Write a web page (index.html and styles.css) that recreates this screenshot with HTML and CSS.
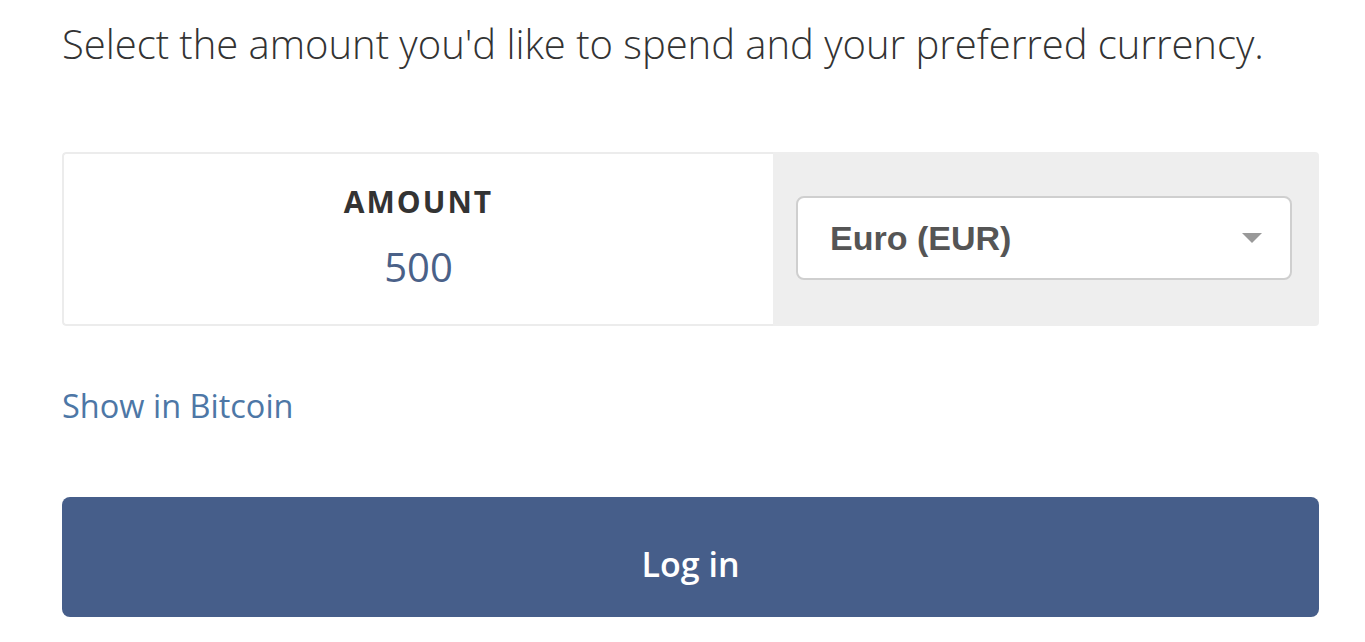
FILE: index.html
```html
<!DOCTYPE html>
<html>
<head>
<meta charset="utf-8">
<link rel="stylesheet" href="styles.css">
</head>
<body>
<main class="page">
  <p class="intro">Select the amount you'd like to spend and your preferred currency.</p>
  <div class="picker">
    <div class="amount">
      <div class="amount-label">AMOUNT</div>
      <div class="amount-value">500</div>
    </div>
    <div class="currency">
      <div class="select">
        <span class="select-text">Euro (EUR)</span>
        <svg class="caret" width="20" height="10" viewBox="0 0 20 10"><path d="M0 0 L20 0 L10 10 Z" fill="#999"/></svg>
      </div>
    </div>
  </div>
  <a class="toggle" href="#">Show in Bitcoin</a>
  <button class="login">Log in</button>
</main>
</body>
</html>
```
FILE: styles.css
```css
html, body {
  margin: 0;
  padding: 0;
  background: #fff;
}
body {
  font-family: "Open Sans", "Liberation Sans", sans-serif;
  color: #333;
}
.page {
  width: 1257px;
  margin-left: 62px;
  display: flex;
  flex-direction: column;
}
.intro {
  margin: 16px 0 0 0;
  font-size: 40px;
  font-weight: 300;
  letter-spacing: -0.03px;
  line-height: 56px;
  color: #333;
  white-space: nowrap;
}
.picker {
  margin-top: 80px;
  height: 174px;
  display: flex;
  border-radius: 4px;
  overflow: hidden;
}
.amount {
  width: 711px;
  box-sizing: border-box;
  border: 2px solid #ececec;
  border-right: none;
  border-radius: 4px 0 0 4px;
  background: #fff;
  display: flex;
  flex-direction: column;
  align-items: center;
  padding-top: 27px;
}
.amount-label {
  font-size: 30px;
  font-weight: 700;
  letter-spacing: 2px;
  line-height: 42px;
  color: #333;
}
.amount-value {
  margin-top: 17px;
  font-size: 40px;
  line-height: 54px;
  color: #4a6188;
}
.currency {
  flex: 1;
  background: #eeeeee;
  padding: 0 27px 0 23px;
  display: flex;
  align-items: center;
}
.select {
  flex: 1;
  height: 84px;
  margin-top: -2px;
  box-sizing: border-box;
  background: #fff;
  border: 2px solid #cfcfcf;
  border-radius: 8px;
  display: flex;
  align-items: center;
  justify-content: space-between;
  padding: 0 28px 0 32px;
}
.select-text {
  font-family: "Liberation Sans", Arial, sans-serif;
  font-weight: 700;
  font-size: 34px;
  color: #555;
}
.caret {
  display: block;
}
.toggle {
  margin-top: 58px;
  align-self: flex-start;
  font-size: 32.5px;
  font-weight: 400;
  line-height: 44px;
  color: #4d77a6;
  text-decoration: none;
}
.login {
  margin-top: 69px;
  height: 120px;
  border: none;
  border-radius: 8px;
  background: #465e8a;
  color: #fff;
  font-family: "Open Sans", "Liberation Sans", sans-serif;
  font-weight: 600;
  font-size: 34px;
  padding: 14px 0 0 0;
}
```
